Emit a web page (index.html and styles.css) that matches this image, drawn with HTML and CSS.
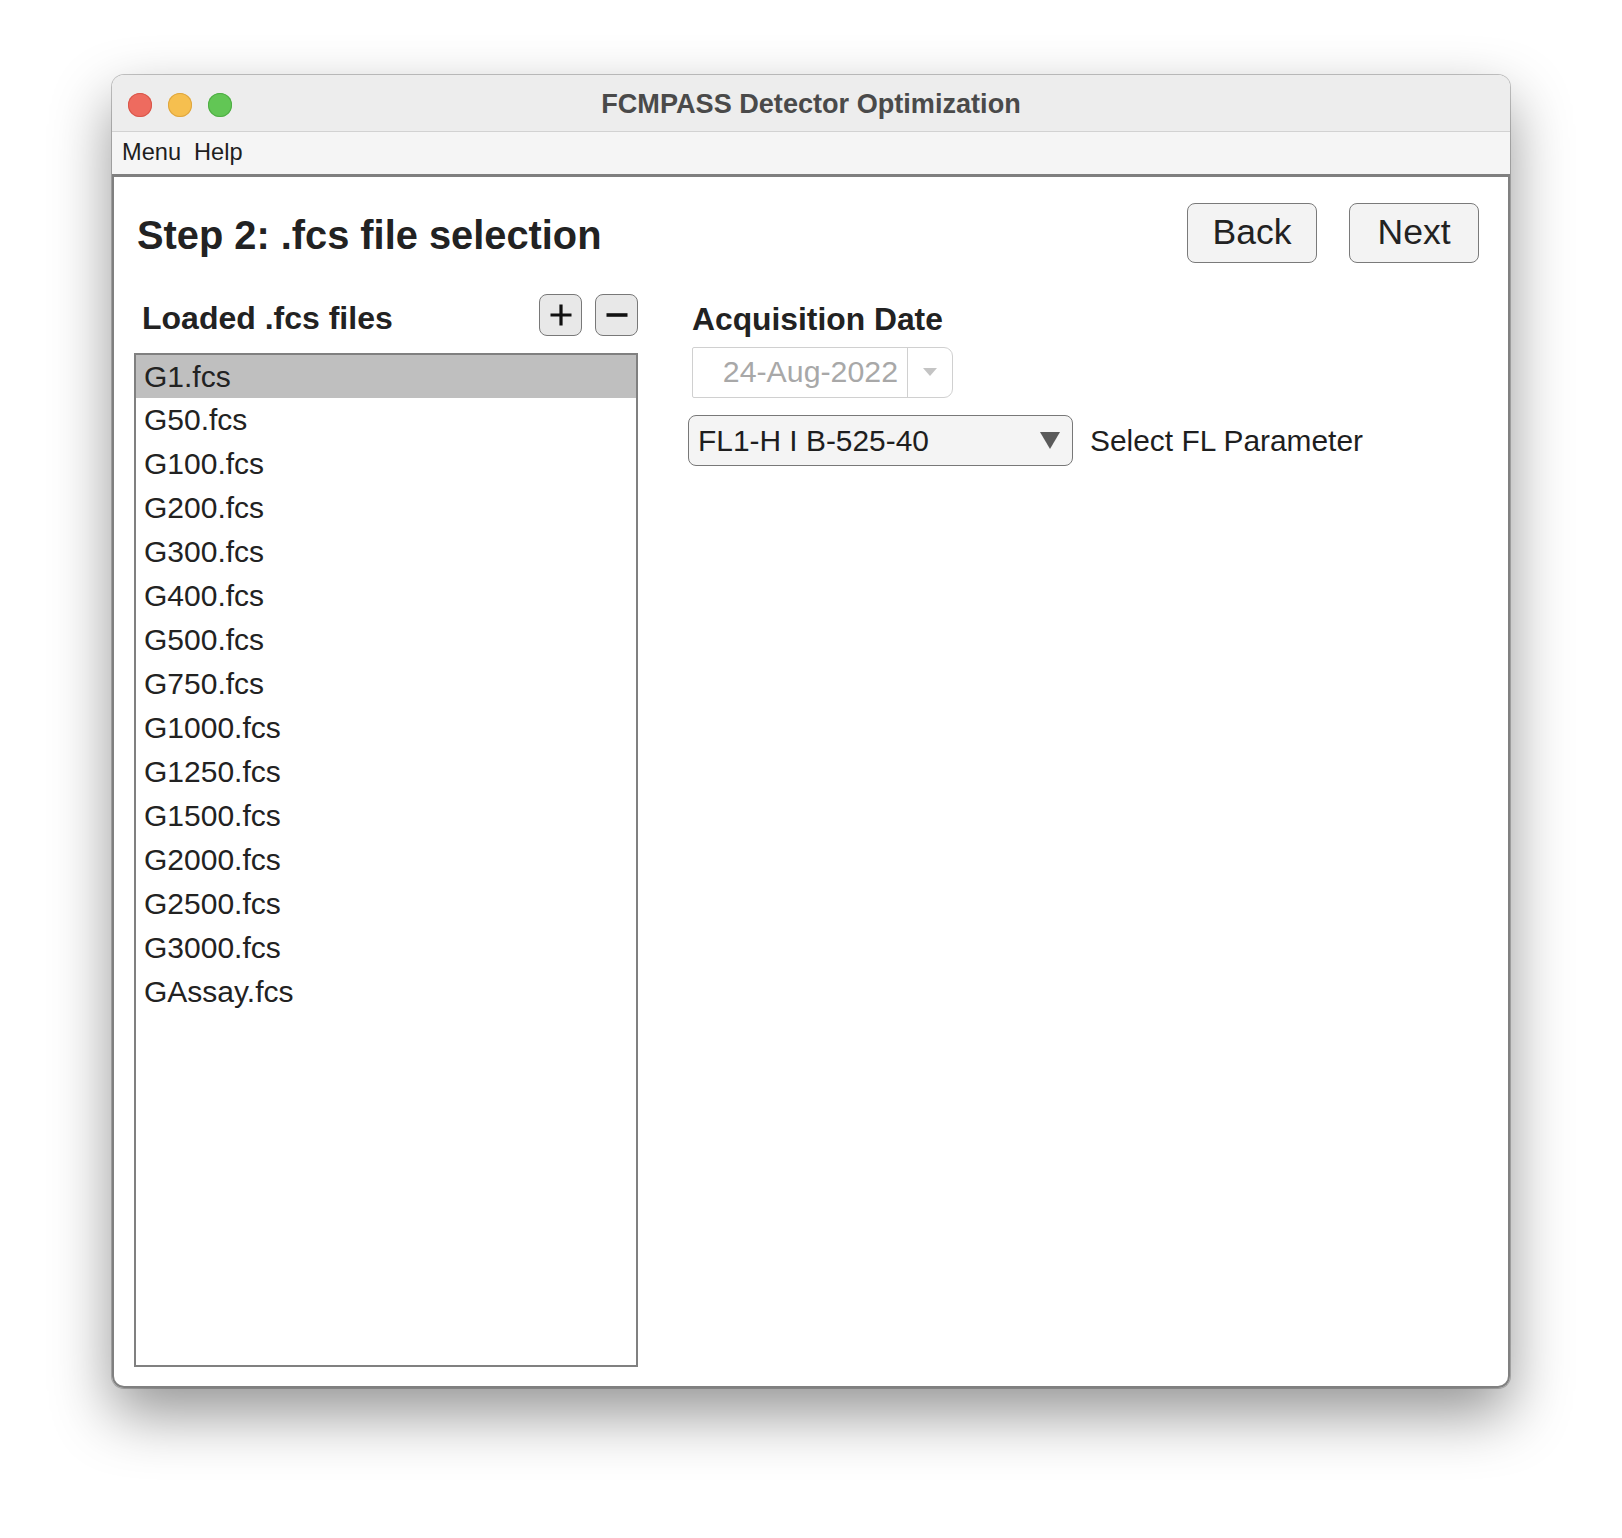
FILE: index.html
```html
<!DOCTYPE html>
<html lang="en">
<head>
<meta charset="utf-8">
<title>FCMPASS Detector Optimization</title>
<link rel="stylesheet" href="styles.css">
</head>
<body>
<div class="window">
  <div class="titlebar">
    <div class="lights">
      <span class="light red"></span>
      <span class="light yellow"></span>
      <span class="light green"></span>
    </div>
    <div class="title">FCMPASS Detector Optimization</div>
    <div class="spacer"></div>
  </div>
  <div class="menubar"><span>Menu</span><span>Help</span></div>
  <div class="panel">
    <div class="toprow">
      <h1 class="heading">Step 2: .fcs file selection</h1>
      <div class="navbtns">
        <button class="btn">Back</button>
        <button class="btn">Next</button>
      </div>
    </div>
    <div class="columns">
      <div class="leftcol">
        <div class="listhead">
          <h2 class="label">Loaded .fcs files</h2>
          <div class="iconbtns">
            <button class="ibtn" aria-label="Add"><svg width="24" height="24" viewBox="0 0 24 24"><path d="M12 1.5V22.5M1.5 12H22.5" stroke="#111" stroke-width="3.2" fill="none"/></svg></button>
            <button class="ibtn" aria-label="Remove"><svg width="24" height="24" viewBox="0 0 24 24"><path d="M1.5 12H22.5" stroke="#111" stroke-width="3.6" fill="none"/></svg></button>
          </div>
        </div>
        <ul class="filelist">
          <li class="sel">G1.fcs</li>
          <li>G50.fcs</li>
          <li>G100.fcs</li>
          <li>G200.fcs</li>
          <li>G300.fcs</li>
          <li>G400.fcs</li>
          <li>G500.fcs</li>
          <li>G750.fcs</li>
          <li>G1000.fcs</li>
          <li>G1250.fcs</li>
          <li>G1500.fcs</li>
          <li>G2000.fcs</li>
          <li>G2500.fcs</li>
          <li>G3000.fcs</li>
          <li>GAssay.fcs</li>
        </ul>
      </div>
      <div class="rightcol">
        <h2 class="label acq">Acquisition Date</h2>
        <div class="datebox">
          <span class="dateval">24-Aug-2022</span>
          <span class="datearrow"><svg width="14" height="8" viewBox="0 0 14 8"><path d="M0 0H14L7 8Z" fill="#c4c4c4"/></svg></span>
        </div>
        <div class="flrow">
          <div class="select">
            <span class="selval">FL1-H I B-525-40</span>
            <svg width="20" height="17" viewBox="0 0 20 17"><path d="M0 0H20L10 17Z" fill="#5a5a5a"/></svg>
          </div>
          <span class="fllabel">Select FL Parameter</span>
        </div>
      </div>
    </div>
  </div>
</div>
</body>
</html>
```

FILE: styles.css
```css
* { box-sizing: border-box; }

html, body {
  margin: 0;
  padding: 0;
  background: #ffffff;
}

body {
  width: 1622px;
  height: 1538px;
  overflow: hidden;
  font-family: "Liberation Sans", Arial, Helvetica, sans-serif;
  color: #222222;
}

.window {
  margin: 75px 0 0 112px;
  width: 1398px;
  height: 1313px;
  border-radius: 12px;
  background: #ffffff;
  display: flex;
  flex-direction: column;
  box-shadow: 0 0 0 1px rgba(0, 0, 0, 0.22), 0 26px 60px rgba(0, 0, 0, 0.42);
}

.titlebar {
  height: 57px;
  flex: none;
  display: grid;
  grid-template-columns: 1fr auto 1fr;
  align-items: center;
  background: #ededed;
  border-bottom: 1px solid #d2d2d2;
  border-radius: 12px 12px 0 0;
  padding-top: 1px;
}

.lights {
  display: flex;
  gap: 16px;
  padding-left: 16px;
  padding-top: 2px;
}

.light {
  width: 24px;
  height: 24px;
  border-radius: 50%;
  display: block;
}

.red { background: #ee6b5f; box-shadow: inset 0 0 0 1px #d8574b; }
.yellow { background: #f6bf4f; box-shadow: inset 0 0 0 1px #dea640; }
.green { background: #62c655; box-shadow: inset 0 0 0 1px #4fad45; }

.title {
  font-weight: bold;
  font-size: 27.1px;
  color: #4a4a4a;
  white-space: nowrap;
}

.menubar {
  height: 45px;
  flex: none;
  display: flex;
  align-items: center;
  gap: 13px;
  padding: 0 0 2px 10px;
  background: #f5f5f5;
  border-bottom: 3px solid #7f7f7f;
  font-size: 23.6px;
  color: #1e1e1e;
}

.panel {
  flex: 1;
  display: flex;
  flex-direction: column;
  padding: 26px 29px 19px 20px;
  border: 2px solid #808080;
  border-top: none;
  border-radius: 0 0 12px 12px;
  min-height: 0;
}

.toprow {
  height: 60px;
  flex: none;
  display: flex;
  justify-content: space-between;
  align-items: center;
}

.heading {
  margin: 5px 0 0 3px;
  font-size: 39.8px;
  font-weight: bold;
  color: #222222;
}

.navbtns {
  display: flex;
  gap: 32px;
}

.btn {
  width: 130px;
  height: 60px;
  border: 1.5px solid #7a7a7a;
  border-radius: 8px;
  background: #f3f3f3;
  font-family: inherit;
  font-size: 35.5px;
  color: #222222;
  padding: 0 0 2px 0;
}

.columns {
  flex: 1;
  display: flex;
  gap: 50px;
  margin-top: 31px;
  min-height: 0;
}

.leftcol {
  width: 504px;
  display: flex;
  flex-direction: column;
}

.listhead {
  height: 42px;
  display: flex;
  justify-content: space-between;
  align-items: center;
}

.label {
  margin: 0;
  font-size: 32px;
  font-weight: bold;
  color: #222222;
  line-height: 42px;
  padding-top: 5px;
}

.listhead .label {
  margin-left: 8px;
}

.iconbtns {
  display: flex;
  gap: 13px;
}

.ibtn {
  width: 43px;
  height: 42px;
  border: 1.5px solid #787878;
  border-radius: 8px;
  background: #e8e8e8;
  padding: 0;
  display: flex;
  align-items: center;
  justify-content: center;
}

.filelist {
  flex: 1;
  list-style: none;
  margin: 17px 0 0 0;
  padding: 0;
  border: 2px solid #808080;
  background: #ffffff;
}

.filelist li {
  height: 44px;
  line-height: 44px;
  padding-left: 8px;
  font-size: 30px;
  color: #222222;
}

.filelist li:first-child {
  height: 43px;
  line-height: 43px;
}

.filelist li.sel {
  background: #bfbfbf;
}

.rightcol {
  display: flex;
  flex-direction: column;
}

.acq {
  margin-left: 4px;
  padding-top: 4px;
  font-size: 31.8px;
}

.datebox {
  margin: 7px 0 0 4px;
  width: 261px;
  height: 51px;
  display: flex;
  border: 1.5px solid #d0d0d0;
  border-radius: 2px 9px 9px 2px;
  background: #ffffff;
}

.dateval {
  flex: 1;
  text-align: right;
  padding-right: 9px;
  font-size: 30.3px;
  line-height: 48px;
  color: #a8a8a8;
}

.datearrow {
  width: 45px;
  border-left: 1.5px solid #d0d0d0;
  display: flex;
  align-items: center;
  justify-content: center;
  padding-bottom: 2px;
}

.flrow {
  margin-top: 17px;
  display: flex;
  align-items: center;
  gap: 17px;
}

.select {
  width: 385px;
  height: 51px;
  display: flex;
  align-items: center;
  justify-content: space-between;
  padding: 0 12px 0 9px;
  border: 1.5px solid #787878;
  border-radius: 8px;
  background: #f4f4f4;
}

.selval {
  font-size: 29.9px;
  color: #1e1e1e;
}

.fllabel {
  font-size: 29.9px;
  color: #1e1e1e;
}
```
